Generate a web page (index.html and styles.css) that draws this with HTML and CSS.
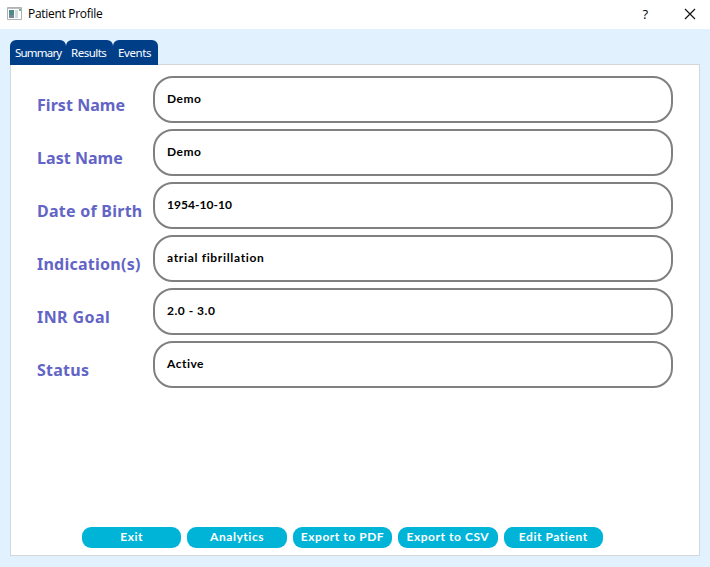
FILE: index.html
```html
<!DOCTYPE html>
<html lang="en">
<head>
<meta charset="utf-8">
<title>Patient Profile</title>
<link rel="stylesheet" href="styles.css">
</head>
<body>
<header class="titlebar">
  <svg class="app-icon" width="16" height="14" viewBox="0 0 16 14"><path fill="#fff" stroke="#aeb2b4" d="M.5.5h14v12H.5z"/><path fill="#b9bfc2" d="M1 1h13v1H1z"/><path fill="#4f8a88" d="M2 3h5v8H2z"/><path fill="#768896" d="M2 8h5v3H2z"/><path fill="#d5dadd" d="M8 3h3v8H8z"/><path fill="#78b895" d="M12 2h2v2h-2z"/></svg>
  <span class="window-title">Patient Profile</span>
  <span class="help">?</span>
  <svg class="close" width="12" height="12" viewBox="0 0 12 12"><path fill="none" stroke="#111" stroke-width="1.15" d="M1 1l10 10M11 1L1 11"/></svg>
</header>
<main class="content">
  <nav class="tabs">
    <span class="tab tab-summary">Summary</span><span class="tab tab-results">Results</span><span class="tab tab-events">Events</span>
  </nav>
  <section class="panel">
    <div class="form">
      <label class="name-label">First Name</label><div class="field">Demo</div>
      <label class="name-label">Last Name</label><div class="field">Demo</div>
      <label>Date of Birth</label><div class="field field-date">1954-10-10</div>
      <label>Indication(s)</label><div class="field field-indication">atrial fibrillation</div>
      <label class="goal-label">INR Goal</label><div class="field">2.0 - 3.0</div>
      <label>Status</label><div class="field">Active</div>
    </div>
    <div class="actions">
      <button>Exit</button><button>Analytics</button><button>Export to PDF</button><button>Export to CSV</button><button>Edit Patient</button>
    </div>
  </section>
</main>
</body>
</html>
```
FILE: styles.css
```css
* { box-sizing: border-box; }
body { margin: 0; height: 567px; overflow: hidden; background: #e1f1fe; font-family: "Noto Sans", sans-serif; display: flex; flex-direction: column; }
.titlebar { height: 29px; background: #fff; display: flex; align-items: center; padding: 0 14px 2px 7px; }
.app-icon { margin-right: 5px; }
.window-title { font: 12px/16px "Open Sans", sans-serif; color: #000; letter-spacing: -.3px; flex: 1; }
.help { font: 13px/16px "Open Sans", sans-serif; margin-right: 36px; }
.content { flex: 1; padding: 11px 10px 11px; display: flex; flex-direction: column; }
.tabs { display: flex; height: 24px; }
.tab { height: 25px; background: #003e88; color: #fff; border-radius: 6px 6px 0 0; font-size: 11.5px; line-height: 25px; padding-left: 5px; white-space: nowrap; z-index: 1; }
.tab-summary { width: 56px; letter-spacing: -.8px; }
.tab-results { width: 47px; letter-spacing: -.5px; }
.tab-events { width: 45px; letter-spacing: -.4px; }
.panel { flex: 1; background: #fff; border: 1px solid #d4d7da; padding: 11px 26px 7px; display: flex; flex-direction: column; }
.form { display: grid; grid-template-columns: 116px 520px; grid-auto-rows: 47px; row-gap: 6px; }
label { color: #6264c6; font-weight: 700; font-size: 16px; line-height: 22px; padding-top: 18px; white-space: nowrap; letter-spacing: .25px; }
.name-label { letter-spacing: .05px; }
.goal-label { letter-spacing: .42px; }
.field { border: 2px solid #808080; border-radius: 20px; padding: 11px 12px; font: 700 12px/20px Lato, sans-serif; color: #000; white-space: nowrap; letter-spacing: .5px; font-variant-ligatures: none; }
.field-date { letter-spacing: .05px; }
.field-indication { letter-spacing: .67px; }
.actions { margin: auto 0 0 45px; display: flex; gap: 6px; }
button { width: 99.4px; height: 21px; border: 0; border-radius: 9px; padding: 0 0 1px; background: #00b4d8; color: #fff; font: 700 12px/20px Lato, sans-serif; letter-spacing: .55px; white-space: nowrap; }
```
